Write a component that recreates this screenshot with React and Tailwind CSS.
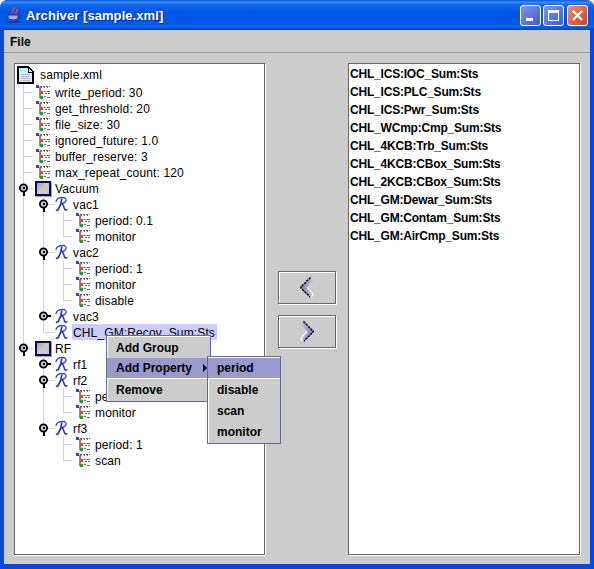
import React from "react";

const rows = [
  { label: "write_period: 30", kind: "leaf", through: [23], hook: [23, 33], x: 36 },
  { label: "get_threshold: 20", kind: "leaf", through: [23], hook: [23, 33], x: 36 },
  { label: "file_size: 30", kind: "leaf", through: [23], hook: [23, 33], x: 36 },
  { label: "ignored_future: 1.0", kind: "leaf", through: [23], hook: [23, 33], x: 36 },
  { label: "buffer_reserve: 3", kind: "leaf", through: [23], hook: [23, 33], x: 36 },
  { label: "max_repeat_count: 120", kind: "leaf", through: [23], hook: [23, 33], x: 36 },
  { label: "Vacuum", kind: "box", through: [23], handle: [23, true], hook: [27, 34], x: 35 },
  { label: "vac1", kind: "r", through: [23, 43], handle: [43, true], hook: [47, 54], x: 55 },
  { label: "period: 0.1", kind: "leaf", through: [23, 43, 63], hook: [63, 73], x: 76 },
  { label: "monitor", kind: "leaf", through: [23, 43], half: [63], hook: [63, 73], x: 76 },
  { label: "vac2", kind: "r", through: [23, 43], handle: [43, true], hook: [47, 54], x: 55 },
  { label: "period: 1", kind: "leaf", through: [23, 43, 63], hook: [63, 73], x: 76 },
  { label: "monitor", kind: "leaf", through: [23, 43, 63], hook: [63, 73], x: 76 },
  { label: "disable", kind: "leaf", through: [23, 43], half: [63], hook: [63, 73], x: 76 },
  { label: "vac3", kind: "r", through: [23, 43], handle: [43, false], hook: [47, 54], x: 55 },
  { label: "CHL_GM:Recov_Sum:Sts", kind: "r", through: [23], half: [43], hook: [43, 54], x: 55, selected: true },
  { label: "RF", kind: "box", half: [23], handle: [23, true], hook: [27, 34], x: 35 },
  { label: "rf1", kind: "r", through: [43], handle: [43, false], hook: [47, 54], x: 55 },
  { label: "rf2", kind: "r", through: [43], handle: [43, true], hook: [47, 54], x: 55 },
  { label: "period: 1", kind: "leaf", through: [43, 63], hook: [63, 73], x: 76 },
  { label: "monitor", kind: "leaf", through: [43], half: [63], hook: [63, 73], x: 76 },
  { label: "rf3", kind: "r", half: [43], handle: [43, true], hook: [47, 54], x: 55 },
  { label: "period: 1", kind: "leaf", through: [63], hook: [63, 73], x: 76 },
  { label: "scan", kind: "leaf", half: [63], hook: [63, 73], x: 76 },
];

const channels = [
  "CHL_ICS:IOC_Sum:Sts",
  "CHL_ICS:PLC_Sum:Sts",
  "CHL_ICS:Pwr_Sum:Sts",
  "CHL_WCmp:Cmp_Sum:Sts",
  "CHL_4KCB:Trb_Sum:Sts",
  "CHL_4KCB:CBox_Sum:Sts",
  "CHL_2KCB:CBox_Sum:Sts",
  "CHL_GM:Dewar_Sum:Sts",
  "CHL_GM:Contam_Sum:Sts",
  "CHL_GM:AirCmp_Sum:Sts",
];

const LeafIcon = () => (
  <svg width="15" height="16" viewBox="0 0 15 16" shapeRendering="crispEdges" className="block shrink-0">
    <rect x="0" y="1" width="3" height="3" fill="#3c3cdc" />
    <rect x="3" y="3" width="2" height="11" fill="#8a8a8a" />
    <path d="M4 2h2v1H4zM7 2h2v1H7zM10 2h2v1h-2zM13 2h1v1h-1zM5 3h1v1H5zM8 3h1v1H8zM11 3h1v1h-1z" fill="#666" />
    <rect x="4" y="7" width="3" height="3" fill="#e8482c" />
    <path d="M8 7h2v1H8zM11 7h3v1h-3zM9 9h2v1H9zM12 9h2v1h-2z" fill="#666" />
    <rect x="4" y="12" width="3" height="3" fill="#1c9c2c" />
    <path d="M8 12h2v1H8zM11 13h3v1h-3z" fill="#666" />
  </svg>
);

const BoxIcon = () => (
  <div className="w-[16px] h-[15px] shrink-0 bg-[linear-gradient(135deg,#a4a4c0,#c8c8c8_45%)] border-2 border-[#0c0c50] shadow-[1px_1px_0_#9999cc]" />
);

// script R icon of a record node
const RIcon = () => (
  <svg width="18" height="16" viewBox="0 0 18 16" fill="none" className="block shrink-0">
    <path d="M1 6C1 3 4 1.500 7.500 1.500C10.500 1.500 11.500 2.800 11 4.500C10.500 6.500 8 7.500 5.800 7.500" stroke="#3a48b8" strokeWidth="1.3" />
    <path d="M6.800 2.500C6.500 6 5.500 10 3.500 13C3 14 1.800 14.500 1 14" stroke="#2a3aa8" strokeWidth="1.7" />
    <path d="M6.500 7.500C8.500 8 8.800 11 9.500 12.800C10 14.300 11.300 14.500 12.500 13.500" stroke="#2a3aa8" strokeWidth="1.6" />
  </svg>
);

// guide lines and expand handle of one tree row
const Guides = ({ row }) => {
  const width = row.x - 15;
  const off = 15;
  return (
    <svg width={width} height="16" shapeRendering="crispEdges" className="block shrink-0">
      {(row.through || []).map((x) => (
        <rect key={x} x={x - off} y="0" width="1" height="16" fill="#ccccff" />
      ))}
      {(row.half || []).map((x) => (
        <rect key={x} x={x - off} y="0" width="1" height="8" fill="#ccccff" />
      ))}
      <rect x={row.hook[0] - off} y="8" width={row.hook[1] - row.hook[0]} height="1" fill="#ccccff" />
      {row.handle && (
        <g transform={`translate(${row.handle[0] - off} 8)`}>
          <circle cx="0.5" cy="0" r="3.6" fill="#c4c4e0" stroke="#000" strokeWidth="1.8" shapeRendering="auto" />
          <rect x="0" y="-1" width="2" height="2" fill="#000" />
          {row.handle[1] ? (
            <rect x="0" y="4" width="2" height="4" fill="#000" />
          ) : (
            <rect x="4" y="-1" width="4" height="2" fill="#000" />
          )}
        </g>
      )}
    </svg>
  );
};

const TreeRow = ({ row }) => (
  <div className="flex items-center h-4">
    <Guides row={row} />
    {row.kind === "leaf" && <LeafIcon />}
    {row.kind === "box" && <BoxIcon />}
    {row.kind === "r" && <RIcon />}
    <span
      className={
        (row.kind === "leaf" ? "ml-1 " : row.kind === "box" ? "ml-[4px] " : "") +
        (row.selected ? "bg-[#ccccff] pl-px pr-[2px] -ml-px " : "") +
        "h-4 leading-[18px] tracking-[0.13px] whitespace-nowrap"
      }
    >
      {row.label}
    </span>
  </div>
);

const Chevron = ({ flip }) => (
  <svg width="14" height="21" viewBox="0 0 14 21" className={flip ? "block -scale-x-100" : "block"}>
    <defs>
      <linearGradient id={flip ? "cr" : "cl"} x1="0" y1="0" x2="1" y2="0">
        <stop offset="0" stopColor="#7c7cb8" />
        <stop offset="1" stopColor="#c4c4e8" />
      </linearGradient>
    </defs>
    <polygon points="0.5,10.5 10.5,0.5 13.5,3.5 6.5,10.5 13.5,17.5 10.5,20.5" fill={`url(#${flip ? "cr" : "cl"})`} />
    <polyline points="10.5,0.5 0.5,10.5 10.5,20.5" fill="none" stroke="#000" strokeWidth="1.4" strokeDasharray="2.5 0.8" />
    <polyline points="10.5,20.5 13.5,17.5 7,10.5" fill="none" stroke="#fff" strokeWidth="1.2" />
  </svg>
);

const ArrowButton = ({ flip }) => (
  <button className="w-[58px] h-[33px] flex items-center justify-center border border-[#666] bg-[#cccccc] shadow-[1px_1px_0_#fff,inset_1px_1px_0_#fff]">
    <Chevron flip={flip} />
  </button>
);

const JavaIcon = () => (
  <svg width="17" height="18" viewBox="0 0 17 18" className="block shrink-0">
    <path d="M9 1c2 2-3 3-1 6M12 3c1 2-2 3-1 5" fill="none" stroke="#e8482c" strokeWidth="1.6" />
    <path d="M3 9h10v2c0 2-2 3-5 3s-5-1-5-3z" fill="#a8a8ec" stroke="#30309c" strokeWidth="1" />
    <path d="M13 10h2v2l-2 1" fill="none" stroke="#30309c" strokeWidth="1" />
    <path d="M1 15h14l-2 2H4z" fill="#30309c" />
  </svg>
);

const TitleButton = ({ className, children }) => (
  <div className={"w-[21px] h-[21px] rounded-[3px] border border-white flex items-center justify-center " + className}>
    {children}
  </div>
);

const MenuItem = ({ label, active, arrow }) => (
  <div
    className={
      "h-[21px] flex items-center justify-between pl-[9px] pr-[3px] font-bold leading-none " +
      (active ? "bg-[#9999cc] border-b border-white" : "")
    }
  >
    <span>{label}</span>
    {arrow && <span className="w-0 h-0 border-y-4 border-y-transparent border-l-4 border-l-black" />}
  </div>
);

export default function App() {
  return (
    <div className="relative w-[594px] h-[569px] bg-[#f0efe6] font-['Liberation_Sans',Arial,sans-serif] text-[12px] text-black overflow-hidden">
      <div className="w-full h-full flex flex-col rounded-t-[8px] overflow-hidden bg-[#0848dc]">
        <div className="h-[30px] shrink-0 flex items-center pl-[5px] pr-[6px] bg-[linear-gradient(180deg,#0a58e0_0%,#3a8cf8_8%,#1068ea_16%,#0055e5_40%,#0058ea_75%,#0a62f0_88%,#0040c4_100%)]">
          <JavaIcon />
          <span className="ml-[4px] text-white font-bold text-[13px] tracking-[0.07px] leading-none [text-shadow:1px_1px_0_#0a2a90]">
            Archiver [sample.xml]
          </span>
          <div className="ml-auto flex gap-[2px]">
            <TitleButton className="bg-[linear-gradient(135deg,#7c98ec,#3c5cd8)]">
              <div className="w-[7px] h-[3px] bg-white mt-[8px] -ml-[3px]" />
            </TitleButton>
            <TitleButton className="bg-[linear-gradient(135deg,#7c98ec,#3c5cd8)]">
              <div className="w-[11px] h-[11px] border border-white border-t-[3px]" />
            </TitleButton>
            <TitleButton className="ml-px bg-[linear-gradient(135deg,#ec9078,#c8401c)]">
              <svg width="11" height="11" viewBox="0 0 11 11" className="block">
                <path d="M1 1l9 9M10 1l-9 9" stroke="#fff" strokeWidth="2" />
              </svg>
            </TitleButton>
          </div>
        </div>

        <div className="flex-1 flex flex-col mx-[4px] mb-[5px] bg-[#cccccc] min-h-0">
          <div className="h-[23px] shrink-0 flex items-center pt-px pl-[6px] font-bold border-b border-[#999999]">File</div>

          <div className="flex-1 min-h-0 flex pt-[10px] pb-[9px] px-[10px]">
            <div className="w-[251px] shrink-0 border border-[#666] bg-white shadow-[1px_1px_0_#fff] overflow-hidden">
              <div className="flex items-center h-[18px] mt-[2px] pl-[2px]">
                <svg width="17" height="18" viewBox="0 0 17 18" shapeRendering="crispEdges" className="block shrink-0">
                  <path d="M1 1h10l5 5v11H1z" fill="#c8f4f4" stroke="#000" strokeWidth="1.6" />
                  <path d="M11 1v5h5z" fill="#fff" stroke="#000" />
                  <path d="M4 8h9M4 10h9M4 12h9M4 14h9" stroke="#e8a0d8" />
                </svg>
                <span className="ml-[6px] leading-4 tracking-[0.13px]">sample.xml</span>
              </div>
              {rows.map((row, i) => (
                <TreeRow key={i} row={row} />
              ))}
            </div>

            <div className="w-[83px] shrink-0 flex flex-col items-start justify-center gap-[11px] pl-[13px]">
              <ArrowButton />
              <ArrowButton flip />
            </div>

            <div className="flex-1 border border-[#666] bg-white shadow-[1px_1px_0_#fff] pt-px pl-px font-bold tracking-[-0.2px]">
              {channels.map((name) => (
                <div key={name} className="h-[18px] leading-[18px] whitespace-nowrap">
                  {name}
                </div>
              ))}
            </div>
          </div>
        </div>
      </div>

      <div className="absolute left-[106px] top-[335px] w-[105px] h-[67px] border border-[#666699] bg-[#cccccc] shadow-[inset_1px_1px_0_#fff] py-px">
        <MenuItem label="Add Group" />
        <MenuItem label="Add Property" active arrow />
        <MenuItem label="Remove" />
      </div>
      <div className="absolute left-[207px] top-[356px] w-[74px] h-[88px] border border-[#666699] bg-[#cccccc] shadow-[inset_1px_1px_0_#fff] py-px">
        <MenuItem label="period" active />
        <MenuItem label="disable" />
        <MenuItem label="scan" />
        <MenuItem label="monitor" />
      </div>
    </div>
  );
}
